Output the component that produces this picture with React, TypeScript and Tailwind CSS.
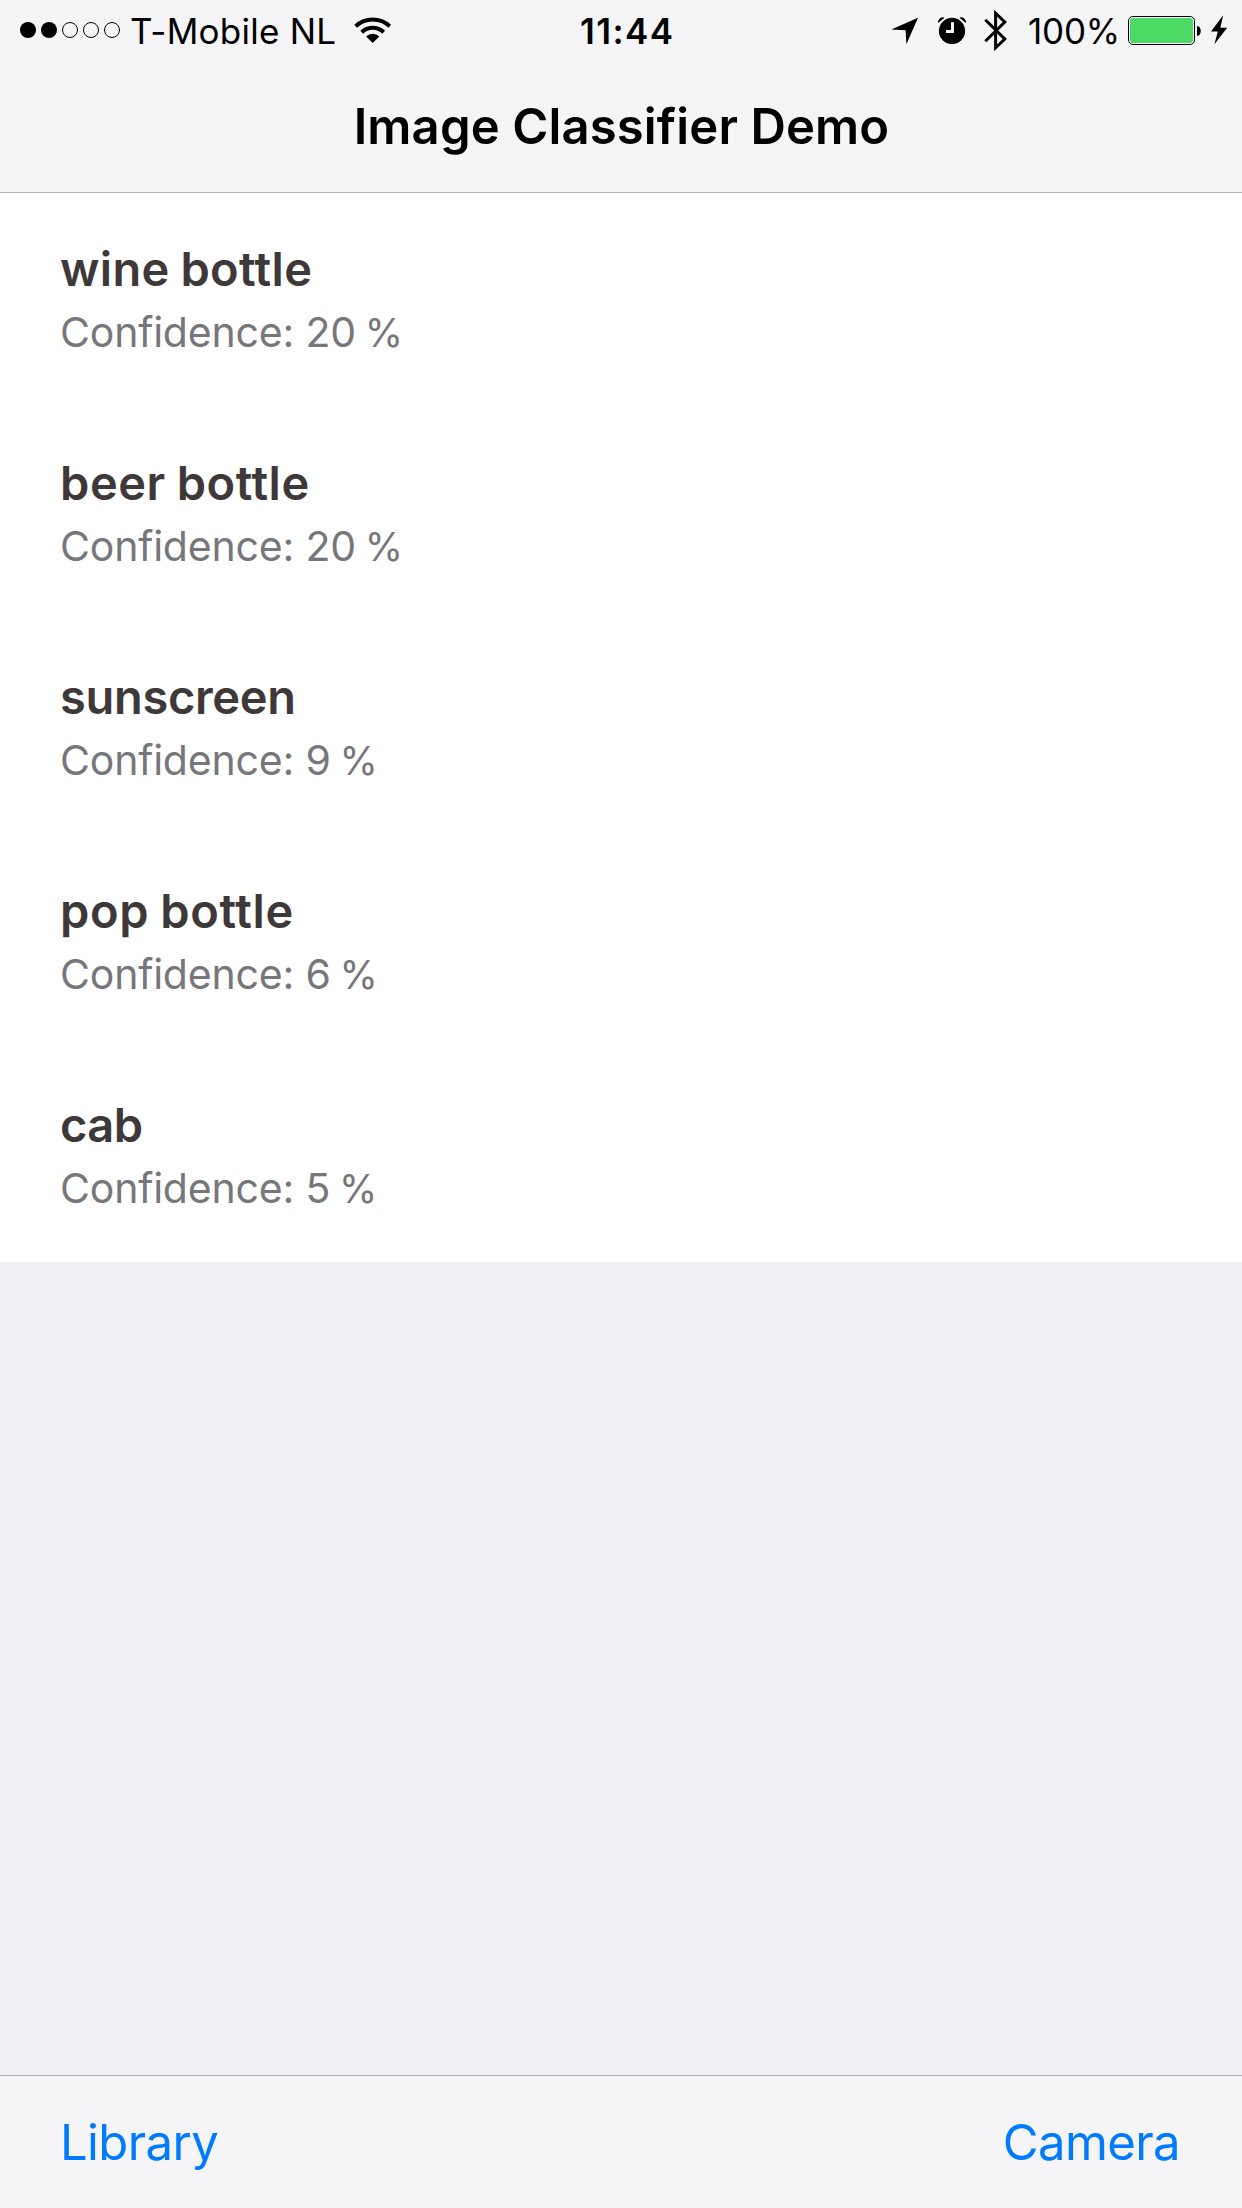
import React from 'react';

const results = [
  { label: 'wine bottle', confidence: 20, tracking: 'tracking-[0.35px]' },
  { label: 'beer bottle', confidence: 20, tracking: 'tracking-[0.55px]' },
  { label: 'sunscreen', confidence: 9, tracking: 'tracking-[-0.3px]' },
  { label: 'pop bottle', confidence: 6, tracking: 'tracking-[0.65px]' },
  { label: 'cab', confidence: 5, tracking: 'tracking-[-0.6px]' },
];

function SignalDots() {
  return (
    <svg className="ml-5 h-4 w-[100px] shrink-0" viewBox="0 0 100 16">
      {[0, 1, 2, 3, 4].map((i) =>
        i < 2 ? (
          <circle key={i} cx={8 + i * 21} cy="8" r="8" />
        ) : (
          <circle key={i} cx={8 + i * 21} cy="8" r="7.5" fill="none" stroke="black" strokeWidth="1" />
        ),
      )}
    </svg>
  );
}

function WifiIcon() {
  return (
    <svg className="h-[60px] w-[38px] shrink-0" viewBox="0 0 38 60">
      <path d="M1.7 26.2 A24.9 24.9 0 0 1 35.7 26.2" fill="none" stroke="black" strokeWidth="4" />
      <path d="M7.7 32.2 A15.9 15.9 0 0 1 29.7 32.2" fill="none" stroke="black" strokeWidth="4" />
      <path d="M18.7 43 L12.1 36.4 A9.3 9.3 0 0 1 25.3 36.4 Z" />
    </svg>
  );
}

function LocationIcon() {
  return (
    <svg className="h-[60px] w-[28px] shrink-0" viewBox="891 0 28 60">
      <path d="M891.3 29.4 L918 17.7 L906.4 44.3 L905.6 30.2 Z" />
    </svg>
  );
}

function AlarmIcon() {
  return (
    <svg className="ml-[18px] h-[60px] w-[30px] shrink-0" viewBox="937 0 30 60">
      <circle cx="952" cy="30.9" r="13.1" />
      <path d="M938 22.6 A5 5 0 0 1 943.6 17.3 L944.2 18.2 A16 16 0 0 0 938.8 22.8 Z" />
      <path d="M966 22.6 A5 5 0 0 0 960.4 17.3 L959.8 18.2 A16 16 0 0 1 965.2 22.8 Z" />
      <path d="M951 22.3 H954 V33 H946 V30 H951 Z" fill="#f5f5f7" />
    </svg>
  );
}

function BluetoothIcon() {
  return (
    <svg className="ml-[16px] h-[60px] w-[26px] shrink-0" viewBox="983 0 26 60">
      <path
        d="M985.3 19.7 L1004.8 39 L995.6 47.8 V13.2 L1004.8 22 L985.3 41.3"
        fill="none"
        stroke="black"
        strokeWidth="3"
      />
    </svg>
  );
}

function BatteryIcon() {
  return (
    <svg className="h-[60px] w-[74px] shrink-0" viewBox="1128 0 74 60">
      <rect x="1128.5" y="16.5" width="66" height="28" rx="4.5" fill="white" stroke="black" strokeWidth="1" />
      <rect x="1130" y="18" width="63" height="25" rx="3" fill="#4cd964" />
      <path d="M1197 26 C1202 26 1202 36 1197 36 Z" />
    </svg>
  );
}

function BoltIcon() {
  return (
    <svg className="ml-[8px] h-[60px] w-[18px] shrink-0" viewBox="1210 0 18 60">
      <path d="M1223.2 15.3 L1211 31.6 H1217.8 L1214.4 44.3 L1227.2 27.7 H1220.3 Z" />
    </svg>
  );
}

export default function App() {
  return (
    <div className="flex h-[2208px] w-[1242px] flex-col overflow-hidden bg-[#efeff4] font-['Inter',sans-serif]">
      <header className="h-[193px] shrink-0 border-b border-[#b2b2b4] bg-[#f5f5f7] text-black">
        <div className="flex h-[60px] items-center text-[35px] leading-[60px] whitespace-nowrap">
          <SignalDots />
          <span className="ml-[10px] w-[224px] shrink-0 pt-[2px] tracking-[0.26px]">T-Mobile NL</span>
          <WifiIcon />
          <span className="ml-[188px] w-[311px] shrink-0 pt-[2px] font-semibold tracking-[1.4px]">11:44</span>
          <LocationIcon />
          <AlarmIcon />
          <BluetoothIcon />
          <span className="ml-[19px] w-[100px] shrink-0 pt-[2px] tracking-[-0.2px]">100%</span>
          <BatteryIcon />
          <BoltIcon />
        </div>
        <h1 className="mt-[37px] pl-[1px] text-center text-[49px] leading-[60px] font-semibold tracking-[0.14px]">
          Image Classifier Demo
        </h1>
      </header>

      <ul className="relative -mt-px shrink-0 border-t border-[#b2b2b4] bg-white">
        {results.map((r) => (
          <li key={r.label} className="h-[214px] pt-12 pl-[60px] last:h-[213px]">
            <div className={`text-[47px] leading-[56px] font-semibold text-[#3e3938] [word-spacing:-1.5px] ${r.tracking}`}>
              {r.label}
            </div>
            <div className="mt-[10px] h-[50px] text-[41px] leading-[50px] tracking-[-0.2px] text-[#77777b]">
              Confidence: <span className="[word-spacing:-2.5px]">{r.confidence} </span>
              <span className="text-[39px] leading-none">%</span>
            </div>
          </li>
        ))}
      </ul>

      <footer className="mt-auto flex h-[133px] shrink-0 items-center justify-between border-t border-[#a6a6aa] bg-[#f5f5f7] pt-[2px] pr-[62px] pl-[60px] text-[49px] leading-[60px] tracking-[-0.6px] text-[#007aff]">
        <button>Library</button>
        <button>Camera</button>
      </footer>
    </div>
  );
}
